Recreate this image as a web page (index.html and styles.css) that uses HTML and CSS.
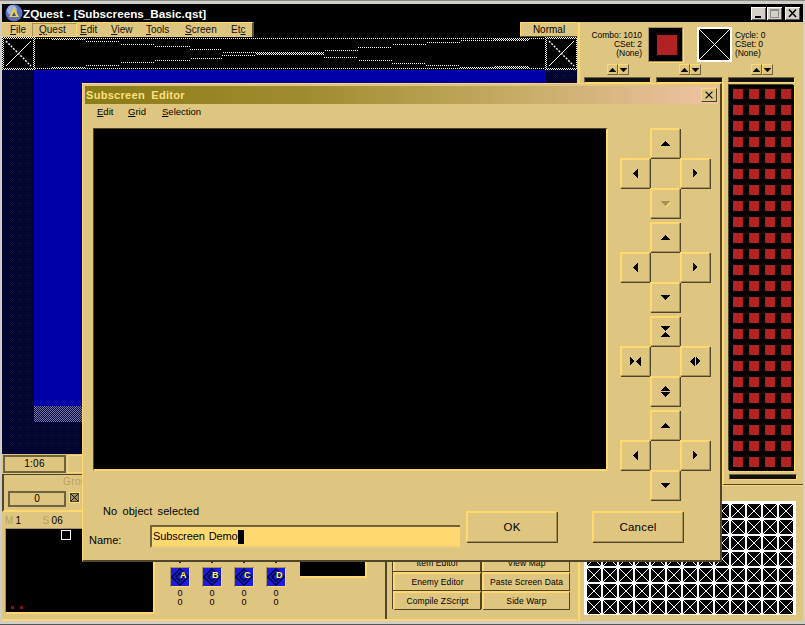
FILE: index.html
```html
<!DOCTYPE html>
<html lang="en">
<head>
<meta charset="utf-8">
<title>ZQuest - [Subscreens_Basic.qst]</title>
<link rel="stylesheet" href="styles.css">
</head>
<body>
<svg class="defs" width="0" height="0" aria-hidden="true">
  <defs>
    <symbol id="i-up" viewBox="0 0 9 5"><path d="M4 0h1v1h1v1h1v1h1v1h1v1H0V4h1V3h1V2h1V1h1z"/></symbol>
    <symbol id="i-down" viewBox="0 0 9 5"><path d="M0 0h9v1H8v1H7v1H6v1H5v1H4V4H3V3H2V2H1V1H0z"/></symbol>
    <symbol id="i-left" viewBox="0 0 5 9"><path d="M0 4h1V3h1V2h1V1h1V0h1v9H4V8H3V7H2V6H1V5H0z"/></symbol>
    <symbol id="i-right" viewBox="0 0 5 9"><path d="M0 0h1v1h1v1h1v1h1v1H4v1H3v1H2v1H1v1H0z"/></symbol>
    <pattern id="p-red" width="16" height="16" patternUnits="userSpaceOnUse"><rect x="4" y="4" width="10" height="10" fill="#b22222"/></pattern>
    <pattern id="p-x" width="16" height="16" patternUnits="userSpaceOnUse">
      <rect width="16" height="16" fill="#000"/>
      <path d="M0 .5h16M.5 0v16M0 1.500h16M1.500 0v16" stroke="#fff" fill="none" shape-rendering="crispEdges"/>
      <path d="M2 2 16 16M16 2 2 16" stroke="#fff" fill="none"/>
    </pattern>
    <pattern id="p-dith" width="2" height="2" patternUnits="userSpaceOnUse"><rect width="1" height="1" fill="#fff"/><rect x="1" y="1" width="1" height="1" fill="#fff"/></pattern>
    <pattern id="p-navy" width="2" height="2" patternUnits="userSpaceOnUse"><rect width="2" height="2" fill="#000"/><rect width="1" height="1" fill="#000060"/><rect x="1" y="1" width="1" height="1" fill="#000060"/></pattern>
    <pattern id="p-edge" width="2" height="2" patternUnits="userSpaceOnUse"><rect width="2" height="2" fill="#000070"/><rect width="1" height="1" fill="#7a7a70"/><rect x="1" y="1" width="1" height="1" fill="#7a7a70"/></pattern>
    <pattern id="p-item" width="18" height="18" patternUnits="userSpaceOnUse">
      <rect width="18" height="18" fill="#1c1ce0"/>
      <path d="M9 1 17 9 9 17 1 9zM9 5 13 9 9 13 5 9z" fill="none" stroke="#05054a" stroke-width="1.6"/>
    </pattern>
    <symbol id="i-item" viewBox="0 0 18 18"><rect width="18" height="18" fill="url(#p-item)"/></symbol>
    <symbol id="i-cross" viewBox="0 0 33 33">
      <rect x="0" y="0" width="33" height="2" fill="url(#p-dith)"/>
      <rect x="0" y="31" width="33" height="2" fill="url(#p-dith)"/>
      <rect x="0" y="0" width="2" height="33" fill="url(#p-dith)"/>
      <rect x="31" y="0" width="2" height="33" fill="url(#p-dith)"/>
      <path d="M4 4 29 29" stroke="#fff" stroke-width="1.4" stroke-dasharray="2 1.4"/>
      <path d="M29 4 4 29" stroke="#fff"/>
    </symbol>
  </defs>
</svg>

<div class="window">
  <header class="titlebar">
    <svg class="app-icon" width="18" height="18" viewBox="0 0 18 18"><circle cx="9" cy="9" r="8.5" fill="#5a6fc0"/><circle cx="7" cy="6" r="5" fill="#9fb0e8"/><path d="M9 3 14 13H4z" fill="#e8d040"/><path d="M9 8 11 12H7z" fill="#3a4a90"/></svg>
    <span class="title-text">ZQuest - [Subscreens_Basic.qst]</span>
    <div class="win-btns">
      <span class="win-btn"><svg width="15" height="13" viewBox="0 0 15 13"><rect x="4" y="9" width="6" height="2"/></svg></span>
      <span class="win-btn"><svg width="15" height="13" viewBox="0 0 15 13"><rect x="3.500" y="2.500" width="8" height="8" fill="none" stroke="#8a8a8a"/><rect x="3" y="2" width="9" height="2" fill="#8a8a8a"/></svg></span>
      <span class="win-btn win-close"><svg width="15" height="13" viewBox="0 0 15 13"><path d="M4 2.500 11 10M11 2.500 4 10" stroke="#000" stroke-width="1.6"/></svg></span>
    </div>
  </header>

  <div class="app">
    <main class="left">
      <div class="menu-row">
        <nav class="menubar">
          <span><u>F</u>ile</span>
          <span class="menu-active"><u>Q</u>uest</span>
          <span><u>E</u>dit</span>
          <span><u>V</u>iew</span>
          <span><u>T</u>ools</span>
          <span><u>S</u>creen</span>
          <span>Et<u>c</u></span>
        </nav>
        <span class="normal-btn">Normal</span>
      </div>

      <svg class="strip" width="576" height="33" viewBox="0 0 576 33">
        <rect width="576" height="33" fill="#000"/>
        <use href="#i-cross" x="0" y="0" width="33" height="33"/>
        <use href="#i-cross" x="543" y="0" width="33" height="33"/>
        <g fill="url(#p-dith)">
          <rect x="33" y="1" width="510" height="1"/>
          <rect x="33" y="31" width="510" height="1"/>
          <rect x="50" y="2" width="33" height="1"/>
          <rect x="50" y="30" width="33" height="1"/>
          <rect x="492" y="2" width="35" height="2"/>
          <rect x="492" y="29" width="35" height="2"/>
          <rect x="254" y="15" width="68" height="3"/>
        </g>
        <path fill="none" stroke="url(#p-dith)" shape-rendering="crispEdges" d="M83 4.500H118M118 7.500H153M153 9.500H188M188 12.500H220M220 15.500H254M322 13.500H356M356 10.500H390M390 7.500H424M424 5.500H458M458 3.500H492M83 28.500H118M118 25.500H153M153 23.500H188M188 21.500H220M220 18.500H254M322 20.500H356M356 23.500H390M390 26.500H424M424 28.500H458M458 30.500H492"/>
      </svg>

      <svg class="viewport" width="576" height="384" viewBox="0 0 576 384">
        <rect width="576" height="384" fill="url(#p-navy)"/>
        <rect x="32" width="512" height="336" fill="#0000a8"/>
        <rect x="32" y="336" width="512" height="16" fill="url(#p-edge)"/>
      </svg>

      <div class="status-row">
        <span class="status-btn">1:06</span>
        <span class="status-btn-2"></span>
      </div>

      <section class="bottom">
        <div class="left-stack">
          <div class="group-panel">
            <span class="group-label">Group</span>
            <div class="group-row">
              <span class="group-input">0</span>
              <span class="check"><svg width="7" height="7" viewBox="0 0 7 7"><path d="M0 0 7 7M7 0 0 7" stroke="#000" stroke-width=".9"/></svg></span>
            </div>
          </div>
          <div class="map-labels"><span class="dim">M</span><span class="map-m">1</span><span class="dim map-s">S</span><span>06</span></div>
          <div class="minimap">
            <span class="cursor"></span>
            <div class="red-dots"><i></i><i></i></div>
          </div>
        </div>

        <div class="items">
          <div class="item-row">
            <div class="item"><span class="tick"></span><span class="item-icon"><svg width="18" height="18" viewBox="0 0 18 18"><use href="#i-item"/><text x="9" y="10" class="item-letter">A</text></svg></span><span class="num">0</span><span class="num">0</span></div>
            <div class="item"><span class="tick"></span><span class="item-icon"><svg width="18" height="18" viewBox="0 0 18 18"><use href="#i-item"/><text x="9" y="10" class="item-letter">B</text></svg></span><span class="num">0</span><span class="num">0</span></div>
            <div class="item"><span class="tick"></span><span class="item-icon"><svg width="18" height="18" viewBox="0 0 18 18"><use href="#i-item"/><text x="9" y="10" class="item-letter">C</text></svg></span><span class="num">0</span><span class="num">0</span></div>
            <div class="item"><span class="tick"></span><span class="item-icon"><svg width="18" height="18" viewBox="0 0 18 18"><use href="#i-item"/><text x="9" y="10" class="item-letter">D</text></svg></span><span class="num">0</span><span class="num">0</span></div>
          </div>
          <div class="black-box"></div>
        </div>

        <div class="commands">
          <div class="cmd-grid">
            <span class="cmd">Item Editor</span><span class="cmd">View Map</span>
            <span class="cmd">Enemy Editor</span><span class="cmd">Paste Screen Data</span>
            <span class="cmd">Compile ZScript</span><span class="cmd">Side Warp</span>
          </div>
        </div>
      </section>
    </main>

    <aside class="right">
      <div class="combo-head">
        <div class="combo-text align-end">Combo: 1010<br>CSet: 2<br>(None)</div>
        <div class="swatch"><span class="swatch-red"></span></div>
        <div class="swatch swatch-x"><svg width="31" height="31" viewBox="0 0 31 31"><path d="M0 0 31 31M31 0 0 31" stroke="#fff"/></svg></div>
        <div class="combo-text">Cycle: 0<br>CSet: 0<br>(None)</div>
      </div>
      <div class="spin-row">
        <div class="spin"><span class="spin-btn"><svg width="7" height="4"><use href="#i-up"/></svg></span><span class="spin-btn"><svg width="7" height="4"><use href="#i-down"/></svg></span></div>
        <div class="spin spin-2"><span class="spin-btn"><svg width="7" height="4"><use href="#i-up"/></svg></span><span class="spin-btn"><svg width="7" height="4"><use href="#i-down"/></svg></span></div>
        <div class="spin spin-3"><span class="spin-btn"><svg width="7" height="4"><use href="#i-up"/></svg></span><span class="spin-btn"><svg width="7" height="4"><use href="#i-down"/></svg></span></div>
      </div>
      <div class="bars"><span class="bar"></span><span class="bar"></span><span class="bar"></span></div>
      <div class="palette-col">
        <div class="palette"><svg width="65" height="386" viewBox="0 0 65 386"><rect width="65" height="386" fill="url(#p-red)"/></svg></div>
        <span class="bar bar-low"></span>
      </div>
      <div class="list-panel">
        <svg class="x-grid" width="210" height="112" viewBox="0 0 210 112"><rect width="210" height="112" fill="url(#p-x)"/></svg>
      </div>
    </aside>
  </div>

  <div class="dialog">
    <div class="dlg-title"><span>Subscreen Editor</span><span class="dlg-close"><svg width="16" height="14" viewBox="0 0 16 14"><path d="M4 3 12 11M12 3 4 11" stroke="#000" stroke-width="1.4"/></svg></span></div>
    <nav class="dlg-menu"><span class="m-edit"><u>E</u>dit</span><span class="m-grid"><u>G</u>rid</span><span><u>S</u>election</span></nav>
    <div class="dlg-body">
      <div class="canvas"></div>
      <div class="dpads">
        <div class="dpad">
          <button class="pad pad-n"><svg width="9" height="5"><use href="#i-up"/></svg></button>
          <button class="pad pad-w"><svg width="5" height="9"><use href="#i-left"/></svg></button>
          <button class="pad pad-e"><svg width="5" height="9"><use href="#i-right"/></svg></button>
          <button class="pad pad-s pad-off"><svg width="9" height="5"><use href="#i-down"/></svg></button>
        </div>
        <div class="dpad">
          <button class="pad pad-n"><svg width="9" height="5"><use href="#i-up"/></svg></button>
          <button class="pad pad-w"><svg width="5" height="9"><use href="#i-left"/></svg></button>
          <button class="pad pad-e"><svg width="5" height="9"><use href="#i-right"/></svg></button>
          <button class="pad pad-s"><svg width="9" height="5"><use href="#i-down"/></svg></button>
        </div>
        <div class="dpad">
          <button class="pad pad-n"><svg width="9" height="12" viewBox="0 0 9 12"><use href="#i-down" width="9" height="5"/><use href="#i-up" y="6" width="9" height="5"/></svg></button>
          <button class="pad pad-w"><svg width="11" height="9" viewBox="0 0 11 9"><use href="#i-right" width="5" height="9"/><use href="#i-left" x="6" width="5" height="9"/></svg></button>
          <button class="pad pad-e"><svg width="11" height="9" viewBox="0 0 11 9"><use href="#i-left" width="5" height="9"/><use href="#i-right" x="6" width="5" height="9"/></svg></button>
          <button class="pad pad-s"><svg width="9" height="11" viewBox="0 0 9 11"><use href="#i-up" width="9" height="5"/><use href="#i-down" y="6" width="9" height="5"/></svg></button>
        </div>
        <div class="dpad">
          <button class="pad pad-n"><svg width="9" height="5"><use href="#i-up"/></svg></button>
          <button class="pad pad-w"><svg width="5" height="9"><use href="#i-left"/></svg></button>
          <button class="pad pad-e"><svg width="5" height="9"><use href="#i-right"/></svg></button>
          <button class="pad pad-s"><svg width="9" height="5"><use href="#i-down"/></svg></button>
        </div>
      </div>
    </div>
    <div class="dlg-foot">
      <div class="foot-fields">
        <div class="no-object">No object selected</div>
        <div class="name-row"><span class="name-label">Name:</span><div class="name-input"><span>Subscreen Demo</span><i class="caret"></i></div></div>
      </div>
      <div class="foot-btns">
        <button class="dlg-btn">OK</button>
        <button class="dlg-btn">Cancel</button>
      </div>
    </div>
  </div>
</div>
</body>
</html>
```

FILE: styles.css
```css
* { box-sizing: border-box; }
html, body { margin: 0; padding: 0; }
body {
  width: 805px; height: 625px; overflow: hidden;
  font: 10px/1 "Liberation Sans", Arial, sans-serif;
  color: #000; background: #d4d0c8;
}
.defs { position: absolute; }
svg { display: block; }

.window {
  position: relative; width: 805px; height: 625px;
  padding: 3px 2px 3px 2px;
  background: #d0cec6;
  border-top: 1px solid #8a8a86;
  border-bottom: 1px solid #555;
}

/* title bar */
.titlebar {
  display: flex; align-items: center; height: 18px; padding-left: 3px;
  background: #000; color: #fff;
}
.app-icon { flex: none; }
.title-text { margin-left: 0; font: bold 11.7px "Liberation Sans", Arial, sans-serif; }
.win-btns { display: flex; margin-left: auto; margin-right: 3px; }
.win-btn {
  width: 15px; height: 13px; background: #d4d0c8;
  box-shadow: inset 1px 1px 0 #fff, inset -1px -1px 0 #555;
  margin-left: 1px;
}
.win-close { margin-left: 3px; }

.app { display: flex; height: 599px; }
.left { width: 576px; flex: none; display: flex; flex-direction: column; }

/* menu row */
.menu-row { display: flex; height: 15px; background: #000; }
.menubar {
  display: grid; grid-template-columns: 29px 41px 31px 35px 39px 46px 21px;
  align-items: center; width: 252px; padding-left: 8px;
  background: #dfc680;
  border-top: 1px solid #ffd970; border-right: 2px solid #5a4e2c;
  color: #111;
}
.menubar span { position: relative; }
.menu-active::before {
  content: ""; position: absolute; inset: -2px 3px -2px -7px;
  border: 1px solid #ffd970; border-top-color: #a5925a; border-left-color: #a5925a;
}
.normal-btn {
  width: 58px; height: 15px; margin-left: auto; display: flex; align-items: center; justify-content: center;
  background: #dfc680; border-top: 1px solid #ffd970; border-left: 1px solid #ffd970;
  border-right: 1px solid #5a4e2c; border-bottom: 1px solid #5a4e2c;
}

/* viewport */
.strip, .viewport { flex: none; }

/* status */
.status-row { display: flex; height: 19px; background: #dfc680; padding-top: 1px; }
.status-btn {
  width: 63px; height: 18px; margin-left: 1px; display: flex; align-items: center; justify-content: center;
  background: #dfc680; border: 2px solid #6e6240; letter-spacing: .3px;
}
.status-btn-2 { flex: 1; margin-left: 1px; background: #dfc680; border: 1px solid #ffd970; }

/* bottom */
.bottom {
  display: flex; height: 149px; background: #dfc680;
  border-bottom: 2px solid #ffd970;
}
.left-stack { width: 154px; flex: none; display: flex; flex-direction: column; }
.group-panel {
  height: 38px; margin-top: 1px; padding: 2px 0 0 4px;
  border-left: 2px solid #4e452a; border-top: 1px solid #4e452a;
  border-bottom: 2px solid #ffd970;
}
.group-label { display: block; margin-left: 55px; height: 10px; color: #b5a061; letter-spacing: .4px; }
.group-row { display: flex; align-items: flex-start; margin-top: 4px; }
.group-input {
  width: 58px; height: 16px; display: flex; align-items: center; justify-content: center;
  border: 2px solid #6e6240;
}
.check {
  width: 9px; height: 9px; margin: 2px 0 0 4px; background: #a5925a;
  box-shadow: 0 0 0 1px #ffd970; border: 1px solid #4e452a;
}
.map-labels { display: flex; height: 16px; padding: 4px 0 0 3px; letter-spacing: .2px; }
.dim { color: #b5a061; }
.map-m { margin-left: 2px; width: 27px; }
.map-s { margin-right: 2px; }
.minimap {
  position: relative; width: 150px; height: 86px; margin-left: 3px;
  background: #000; border: 1px solid #a5925a; border-right: 2px solid #ffd970; border-bottom: 2px solid #ffd970;
}
.cursor { position: absolute; left: 55px; top: 1px; width: 10px; height: 10px; border: 1px solid #fff; }
.red-dots { position: absolute; left: 5px; bottom: 3px; display: flex; gap: 6px; }
.red-dots i { width: 3px; height: 3px; background: #8a1010; }

.items { width: 231px; flex: none; position: relative; padding: 88px 0 0 14px; border-right: 2px solid #4e452a; }
.item-row { display: flex; gap: 12px; }
.item { width: 20px; display: flex; flex-direction: column; align-items: center; }
.tick { width: 2px; height: 2px; background: #222; margin-bottom: 4px; }
.item-icon { width: 20px; height: 20px; padding: 1px; background: #ffd970; box-shadow: inset 1px 1px 0 #a5925a; }
.item-letter { font: bold 9px "Liberation Sans", sans-serif; fill: #ffff50; }
.num { height: 9px; font-size: 9px; line-height: 9px; }
.item-icon + .num { margin-top: 2px; }
.black-box {
  position: absolute; left: 144px; top: 80px; width: 67px; height: 25px;
  background: #000; border-right: 2px solid #ffd970; border-bottom: 2px solid #ffd970;
}

.commands { flex: 1; padding: 80px 0 0 6px; }
.cmd-grid {
  display: grid; grid-template-columns: 88px 88px; grid-auto-rows: 19px; column-gap: 1px;
  width: 178px;
}
.cmd {
  display: flex; align-items: center; justify-content: center; white-space: nowrap;
  border: 1px solid #4e452a; border-top: 2px solid #ffd970; border-left: 2px solid #ffd970;
  box-shadow: -1px -1px 0 #4e452a;
  font-size: 8.5px; letter-spacing: .1px;
}

/* right */
.right { flex: 1; min-width: 0; background: #dfc680; border-left: 2px solid #ffd970; box-shadow: -1px 0 0 #dfc680; display: flex; flex-direction: column; }
.combo-head { display: flex; align-items: flex-start; height: 42px; padding-top: 5px; }
.combo-text { font-size: 8.5px; line-height: 9px; margin-top: 4px; white-space: nowrap; letter-spacing: -.05px; }
.align-end { width: 62px; text-align: right; margin-right: 6px; }
.swatch {
  width: 35px; height: 35px; flex: none; padding: 7px 8px; background: #000;
  border: 1px solid #a5925a; box-shadow: 1px 1px 0 #ffd970;
}
.swatch-red { display: block; width: 20px; height: 20px; background: #b22222; }
.swatch-x { margin: 0 3px 0 14px; padding: 0; border: 2px solid #fff; box-shadow: none; }
.swatch-x svg { width: 31px; height: 31px; }
.spin-row { position: relative; height: 12px; display: flex; }
.spin { display: flex; margin-left: 27px; }
.spin-2 { margin-left: 50px; }
.spin-3 { margin-left: 50px; }
.spin-btn {
  width: 11px; height: 11px; display: flex; align-items: center; justify-content: center;
  background: #dfc680; border: 1px solid #ffd970; border-right-color: #6e6240; border-bottom-color: #6e6240;
}
.bars { display: flex; gap: 5px; padding: 1px 0 0 4px; height: 7px; }
.bar {
  flex: none; width: 67px; height: 6px; background: #111;
  border: 1px solid #ffd970; border-top-color: #6e6240; border-left-color: #6e6240;
}
.palette-col {
  margin-left: auto; width: 81px; height: 402px; padding: 2px 7px 0 5px;
  border-left: 2px solid #ffd970;
  border-bottom: 1px solid #4e452a;
}
.palette { width: 65px; height: 386px; background: #000; box-shadow: -1px -1px 0 #4e452a, 1px 1px 0 #ffd970; }
.bar-low { display: block; width: 68px; margin-top: 3px; }
.list-panel { flex: 1; padding: 17px 0 0 5px; box-shadow: inset 0 1px 0 #ffd970; }
.x-grid { outline: 1px solid #fff; }

/* dialog */
.dialog {
  position: absolute; left: 82px; top: 82px; width: 640px; height: 479px;
  padding: 2px; display: flex; flex-direction: column;
  background: #dfc680;
  border-top: 1px solid #ffd970; border-left: 1px solid #ffd970;
  border-right: 2px solid #4e452a; border-bottom: 2px solid #4e452a;
}
.dlg-title {
  display: flex; align-items: center; justify-content: space-between; flex: none; height: 18px;
  background: linear-gradient(90deg, #8a7c17 0%, #a08c30 35%, #c8ad68 70%, #f0c3a4 100%);
  color: #ffe07e; font: bold 11px "Liberation Sans", Arial, sans-serif; letter-spacing: .3px; word-spacing: 3px; padding-left: 1px;
}
.dlg-close {
  width: 16px; height: 14px; margin-right: 1px; background: #dfc680;
  border-top: 1px solid #ffd970; border-left: 1px solid #ffd970;
  border-right: 1px solid #4e452a; border-bottom: 1px solid #4e452a;
}
.dlg-close svg { width: 14px; height: 12px; }
.dlg-menu { display: flex; height: 24px; padding: 3px 0 0 12px; font-size: 9.5px; }
.m-edit { width: 31px; }
.m-grid { width: 34px; }
.dlg-body { display: flex; height: 373px; }
.canvas {
  width: 515px; height: 343px; margin-left: 8px; background: #000;
  border-top: 1px solid #4e452a; border-left: 1px solid #4e452a;
  border-right: 2px solid #ffd970; border-bottom: 2px solid #ffd970;
}
.dpads { display: flex; flex-direction: column; gap: 4px; margin-left: 12px; }
.dpad { display: grid; grid-template-columns: repeat(3, 30px); grid-template-rows: repeat(3, 30px); }
.pad {
  padding: 0; display: flex; align-items: center; justify-content: center;
  background: #dfc680; font: inherit;
  border: 0; border-top: 2px solid #ffd970; border-left: 2px solid #ffd970;
  border-right: 1px solid #a5925a; border-bottom: 1px solid #a5925a;
  box-shadow: 1px 1px 0 #4e452a;
}
.pad-n { grid-area: 1 / 2; }
.pad-w { grid-area: 2 / 1; }
.pad-e { grid-area: 2 / 3; }
.pad-s { grid-area: 3 / 2; }
.pad-off svg { fill: #a5925a; filter: drop-shadow(1px 1px 0 #ffd970); }

.dlg-foot { display: flex; flex: 1; padding-left: 4px; }
.foot-fields { width: 371px; padding-top: 5px; }
.no-object { margin-left: 14px; font-size: 11px; letter-spacing: .1px; word-spacing: 2px; height: 14px; }
.name-row { display: flex; align-items: flex-start; margin-top: 5px; }
.name-label { width: 61px; padding-top: 10px; font-size: 11px; }
.name-input {
  width: 310px; height: 23px; display: flex; align-items: center; padding-left: 1px;
  background: #ffd970; font-size: 11px; word-spacing: 1px; letter-spacing: -.1px;
  border-top: 2px solid #6e6240; border-left: 2px solid #6e6240;
  border-bottom: 2px solid #e8cd80;
}
.caret { width: 6px; height: 14px; background: #000; }
.foot-btns { display: flex; gap: 35px; margin: 10px 0 0 6px; }
.dlg-btn {
  width: 91px; height: 31px; padding: 0; background: #dfc680; color: #000;
  font: 11.5px "Liberation Sans", Arial, sans-serif; letter-spacing: .2px;
  border: 0; border-top: 2px solid #ffd970; border-left: 2px solid #ffd970;
  border-right: 1px solid #a5925a; border-bottom: 1px solid #a5925a;
  box-shadow: 1px 1px 0 #4e452a;
}
```
